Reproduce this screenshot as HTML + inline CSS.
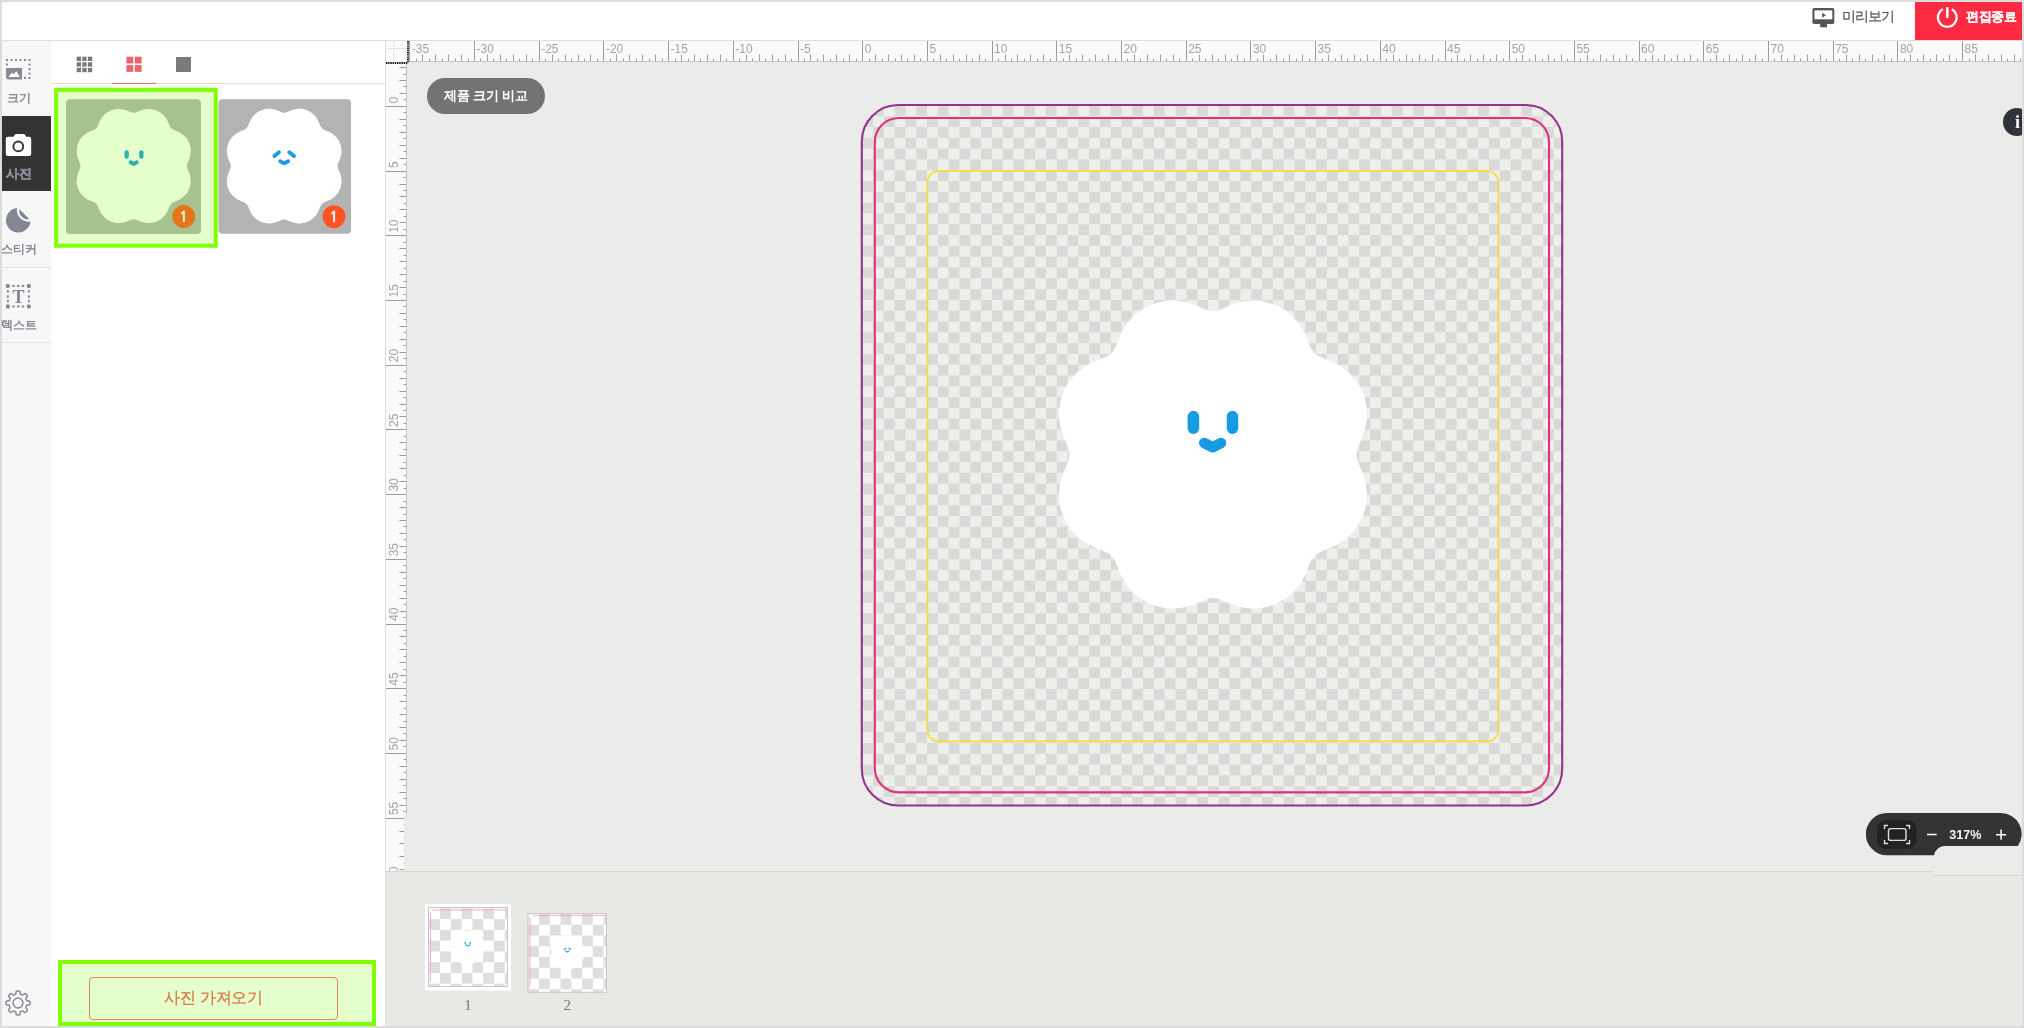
<!DOCTYPE html>
<html><head><meta charset="utf-8">
<style>
*{box-sizing:border-box;margin:0;padding:0}
html,body{width:2024px;height:1028px;overflow:hidden;background:#fff;font-family:"Liberation Sans",sans-serif}
.a{position:absolute;will-change:transform}
#frameT{left:0;top:0;width:2024px;height:2px;background:#dcdcdc}
#frameL{left:0;top:0;width:2px;height:1028px;background:#dcdcdc}
#frameR{left:2022px;top:0;width:2px;height:1028px;background:#dcdcdc}
#frameB{left:0;top:1026px;width:2024px;height:2px;background:#dcdcdc}
#hdrLine{left:2px;top:40px;width:2020px;height:1px;background:#dedede}
#endBtn{left:1915px;top:2px;width:107px;height:38px;background:#fd2b42;color:#fff}
#endBtn span{position:absolute;left:51px;top:6px;font-size:13px;font-weight:bold;letter-spacing:-0.3px;-webkit-text-stroke:0.15px #fff}
#prev span{position:absolute;left:1842px;top:8px;font-size:14px;color:#555;letter-spacing:-1px;will-change:transform;-webkit-text-stroke:0.2px #555}
#side{left:2px;top:41px;width:49px;height:985px;background:#f7f7f7}
.sideTxt{position:absolute;will-change:transform;font-size:12px;color:#7c808c;white-space:nowrap;-webkit-text-stroke:0.35px #7c808c}
#panel{left:51px;top:41px;width:334px;height:985px;background:#fff}
#panelBorder{left:385px;top:41px;width:1px;height:985px;background:#dedede}
#tabLine{left:51px;top:83px;width:334px;height:1px;background:#dedede}
#tabRed{left:112px;top:83px;width:44px;height:1px;background:#f0636b}
#cornerBox{left:386px;top:41px;width:21px;height:21px;background:#fafafa}
.hr{position:absolute;will-change:transform;left:407px;top:41px;background:#fafafa}
.vr{position:absolute;will-change:transform;left:386px;top:62px;background:#fafafa}
#canvas{left:407px;top:62px;width:1615px;height:809px;background:#ebebe9}
#film{left:386px;top:871px;width:1636px;height:155px;background:#e8e8e4;border-top:1px solid #d6d6d2}
#pill{left:427px;top:77.5px;width:118px;height:36.2px;border-radius:18.1px;background:#737373;color:#fff;font-size:13.3px;font-weight:bold;text-align:center;line-height:35px;letter-spacing:-0.2px}
</style></head><body>
<div class="a" id="frameT"></div><div class="a" id="frameL"></div><div class="a" id="frameR"></div><div class="a" id="frameB"></div>
<div class="a" id="hdrLine"></div>

<!-- header preview -->
<div id="prev">
<svg class="a" style="left:1812px;top:8px" width="23" height="20" viewBox="0 0 23 20">
<rect x="0.4" y="0" width="21.9" height="16" rx="1.8" fill="#555"/>
<rect x="2.5" y="2.4" width="17.8" height="8.9" fill="#fff"/>
<path d="M10.2 4.7L14 7.2L10.2 9.8Z" fill="#555"/>
<rect x="8.2" y="15.5" width="6.8" height="3.8" fill="#555"/>
</svg>
<span>미리보기</span>
</div>
<div class="a" id="endBtn">
<svg class="a" style="left:21px;top:3.2px" width="23" height="25" viewBox="0 0 23 25">
<path d="M6.9 4.1A9.4 9.4 0 1 0 15.7 4.1" fill="none" stroke="#fff" stroke-width="2.2"/>
<path d="M11.3 3.2V12.1" stroke="#fff" stroke-width="2.5" stroke-linecap="round"/>
</svg>
<span>편집종료</span>
</div>

<!-- sidebar -->
<div class="a" id="side"></div>
<svg class="a" style="left:5px;top:58px" width="27" height="23" viewBox="0 0 27 23">
<g fill="#868a96">
<rect x="1" y="1" width="2" height="2"/><rect x="5.5" y="1" width="2" height="2"/><rect x="10" y="1" width="2" height="2"/><rect x="14.5" y="1" width="2" height="2"/><rect x="19" y="1" width="2" height="2"/><rect x="23.5" y="1" width="2" height="2"/>
<rect x="1" y="5.5" width="2" height="2"/>
<rect x="23.5" y="5.5" width="2" height="2"/><rect x="23.5" y="10" width="2" height="2"/><rect x="23.5" y="14.5" width="2" height="2"/><rect x="23.5" y="19" width="2" height="2"/><rect x="19" y="19" width="2" height="2"/>
<path d="M1 10H17V21.5H4A3 3 0 0 1 1 18.5Z"/>
</g>
<path d="M3.5 19L7 14.5L8.6 16.5L11.2 13L14.8 19Z" fill="#fff"/>
</svg>
<div class="sideTxt" style="left:7px;top:90px">크기</div>

<div class="a" style="left:2px;top:116px;width:49px;height:75px;background:#333"></div>
<svg class="a" style="left:5px;top:133px" width="27" height="24" viewBox="0 0 27 24">
<path d="M8.5 3.8L10 1.6A1.5 1.5 0 0 1 11.3 1H18.5A1.5 1.5 0 0 1 19.8 1.6L21.3 3.8H24A2.2 2.2 0 0 1 26.2 6V20.7A2.2 2.2 0 0 1 24 22.9H3A2.2 2.2 0 0 1 0.8 20.7V6A2.2 2.2 0 0 1 3 3.8Z" fill="#fff"/>
<circle cx="13.3" cy="13.4" r="4.9" fill="none" stroke="#333" stroke-width="1.9"/>
</svg>
<div class="sideTxt" style="left:6px;top:165px;color:#fff;font-weight:bold;font-size:13px">사진</div>

<svg class="a" style="left:5px;top:207px" width="27" height="27" viewBox="0 0 27 27">
<path d="M12 1A11.73 11.73 0 0 0 25.5 14.5A12.3 12.3 0 1 1 12 1Z" fill="#838793"/>
<path d="M14.5 2.3A8.2 8.2 0 0 0 24.2 12.1Z" fill="#838793"/>
</svg>
<div class="sideTxt" style="left:1px;top:241px">스티커</div>
<div class="a" style="left:2px;top:267px;width:49px;height:1px;background:#e4e4e4"></div>

<svg class="a" style="left:5px;top:283px" width="27" height="26" viewBox="0 0 27 26">
<g fill="#838793">
<rect x="1" y="1.1" width="3.7" height="3.7"/><rect x="22" y="1.1" width="3.7" height="3.7"/><rect x="1" y="21.6" width="3.7" height="3.7"/><rect x="22" y="21.6" width="3.7" height="3.7"/>
<rect x="7.3" y="2" width="2.4" height="1.9"/><rect x="12.1" y="2" width="2.4" height="1.9"/><rect x="16.8" y="2" width="2.4" height="1.9"/>
<rect x="7.3" y="22.5" width="2.4" height="1.9"/><rect x="12.1" y="22.5" width="2.4" height="1.9"/><rect x="16.8" y="22.5" width="2.4" height="1.9"/>
<rect x="1.9" y="7.1" width="1.9" height="2.4"/><rect x="1.9" y="12.4" width="1.9" height="2.4"/><rect x="1.9" y="16.8" width="1.9" height="2.4"/>
<rect x="22.9" y="7.1" width="1.9" height="2.4"/><rect x="22.9" y="12.4" width="1.9" height="2.4"/><rect x="22.9" y="16.8" width="1.9" height="2.4"/>
</g>
<text x="13.4" y="19.8" text-anchor="middle" font-family="Liberation Serif" font-size="18" font-weight="bold" fill="#838793">T</text>
</svg>
<div class="sideTxt" style="left:1px;top:317px">텍스트</div>
<div class="a" style="left:2px;top:342px;width:49px;height:1px;background:#e4e4e4"></div>

<svg class="a" style="left:5.3px;top:990px" width="26" height="26" viewBox="0 0 26 26">
<path d="M13.00,1.00 13.31,1.01 13.63,1.03 13.94,1.05 14.25,1.11 14.55,1.22 14.82,1.51 15.00,2.20 15.08,3.20 15.19,3.89 15.36,4.19 15.57,4.33 15.79,4.42 16.01,4.51 16.23,4.59 16.45,4.68 16.66,4.77 16.88,4.87 17.09,4.97 17.31,5.05 17.56,5.10 17.89,5.02 18.46,4.60 19.22,3.95 19.84,3.59 20.23,3.57 20.53,3.71 20.78,3.89 21.02,4.09 21.26,4.30 21.48,4.52 21.70,4.74 21.91,4.98 22.11,5.22 22.29,5.47 22.43,5.77 22.41,6.16 22.05,6.78 21.40,7.54 20.98,8.11 20.90,8.44 20.95,8.69 21.03,8.91 21.13,9.12 21.23,9.34 21.32,9.55 21.41,9.77 21.49,9.99 21.58,10.21 21.67,10.43 21.81,10.64 22.11,10.81 22.80,10.92 23.80,11.00 24.49,11.18 24.78,11.45 24.89,11.75 24.95,12.06 24.97,12.37 24.99,12.69 25.00,13.00 24.99,13.31 24.97,13.63 24.95,13.94 24.89,14.25 24.78,14.55 24.49,14.82 23.80,15.00 22.80,15.08 22.11,15.19 21.81,15.36 21.67,15.57 21.58,15.79 21.49,16.01 21.41,16.23 21.32,16.45 21.23,16.66 21.13,16.88 21.03,17.09 20.95,17.31 20.90,17.56 20.98,17.89 21.40,18.46 22.05,19.22 22.41,19.84 22.43,20.23 22.29,20.53 22.11,20.78 21.91,21.02 21.70,21.26 21.48,21.48 21.26,21.70 21.02,21.91 20.78,22.11 20.53,22.29 20.23,22.43 19.84,22.41 19.22,22.05 18.46,21.40 17.89,20.98 17.56,20.90 17.31,20.95 17.09,21.03 16.88,21.13 16.66,21.23 16.45,21.32 16.23,21.41 16.01,21.49 15.79,21.58 15.57,21.67 15.36,21.81 15.19,22.11 15.08,22.80 15.00,23.80 14.82,24.49 14.55,24.78 14.25,24.89 13.94,24.95 13.63,24.97 13.31,24.99 13.00,25.00 12.69,24.99 12.37,24.97 12.06,24.95 11.75,24.89 11.45,24.78 11.18,24.49 11.00,23.80 10.92,22.80 10.81,22.11 10.64,21.81 10.43,21.67 10.21,21.58 9.99,21.49 9.77,21.41 9.55,21.32 9.34,21.23 9.12,21.13 8.91,21.03 8.69,20.95 8.44,20.90 8.11,20.98 7.54,21.40 6.78,22.05 6.16,22.41 5.77,22.43 5.47,22.29 5.22,22.11 4.98,21.91 4.74,21.70 4.52,21.48 4.30,21.26 4.09,21.02 3.89,20.78 3.71,20.53 3.57,20.23 3.59,19.84 3.95,19.22 4.60,18.46 5.02,17.89 5.10,17.56 5.05,17.31 4.97,17.09 4.87,16.88 4.77,16.66 4.68,16.45 4.59,16.23 4.51,16.01 4.42,15.79 4.33,15.57 4.19,15.36 3.89,15.19 3.20,15.08 2.20,15.00 1.51,14.82 1.22,14.55 1.11,14.25 1.05,13.94 1.03,13.63 1.01,13.31 1.00,13.00 1.01,12.69 1.03,12.37 1.05,12.06 1.11,11.75 1.22,11.45 1.51,11.18 2.20,11.00 3.20,10.92 3.89,10.81 4.19,10.64 4.33,10.43 4.42,10.21 4.51,9.99 4.59,9.77 4.68,9.55 4.77,9.34 4.87,9.12 4.97,8.91 5.05,8.69 5.10,8.44 5.02,8.11 4.60,7.54 3.95,6.78 3.59,6.16 3.57,5.77 3.71,5.47 3.89,5.22 4.09,4.98 4.30,4.74 4.52,4.52 4.74,4.30 4.98,4.09 5.22,3.89 5.47,3.71 5.77,3.57 6.16,3.59 6.78,3.95 7.54,4.60 8.11,5.02 8.44,5.10 8.69,5.05 8.91,4.97 9.12,4.87 9.34,4.77 9.55,4.68 9.77,4.59 9.99,4.51 10.21,4.42 10.43,4.33 10.64,4.19 10.81,3.89 10.92,3.20 11.00,2.20 11.18,1.51 11.45,1.22 11.75,1.11 12.06,1.05 12.37,1.03 12.69,1.01Z" fill="none" stroke="#868a96" stroke-width="1.5" stroke-linejoin="round"/>
<circle cx="13" cy="13" r="4.9" fill="none" stroke="#868a96" stroke-width="1.5"/>
</svg>

<!-- panel -->
<div class="a" id="panel"></div>
<div class="a" id="panelBorder"></div>
<div class="a" id="tabLine"></div>
<div class="a" id="tabRed"></div>
<svg class="a" style="left:76px;top:56px" width="17" height="17" viewBox="0 0 17 17">
<g fill="#777"><rect x="0.7" y="0.7" width="4.3" height="4.3"/><rect x="6.3" y="0.7" width="4.3" height="4.3"/><rect x="11.9" y="0.7" width="4.3" height="4.3"/>
<rect x="0.7" y="6.3" width="4.3" height="4.3"/><rect x="6.3" y="6.3" width="4.3" height="4.3"/><rect x="11.9" y="6.3" width="4.3" height="4.3"/>
<rect x="0.7" y="11.9" width="4.3" height="4.3"/><rect x="6.3" y="11.9" width="4.3" height="4.3"/><rect x="11.9" y="11.9" width="4.3" height="4.3"/></g>
</svg>
<svg class="a" style="left:126px;top:56px" width="17" height="17" viewBox="0 0 17 17">
<g fill="#f0636b"><rect x="0.4" y="0.7" width="6.8" height="6.8"/><rect x="8.8" y="0.7" width="6.8" height="6.8"/><rect x="0.4" y="9.1" width="6.8" height="6.8"/><rect x="8.8" y="9.1" width="6.8" height="6.8"/></g>
</svg>
<div class="a" style="left:176px;top:57px;width:15px;height:15px;background:#7a7a7a"></div>

<!-- thumbnails -->
<svg class="a" style="left:0;top:0" width="390" height="260" viewBox="0 0 390 260">
<defs><filter id="tb" x="-10%" y="-10%" width="120%" height="120%"><feGaussianBlur stdDeviation="0.6"/></filter></defs>
<rect x="218.4" y="99.3" width="132.6" height="134.5" rx="4" fill="#b3b3b3"/>
<path d="M337.6,166.1 337.9,164.2 338.6,162.3 339.5,160.3 340.2,158.2 340.9,156.1 341.3,154.0 341.5,151.8 341.5,149.7 341.2,147.6 340.8,145.5 340.1,143.5 339.3,141.6 338.2,139.8 337.0,138.0 335.6,136.4 334.0,135.0 332.3,133.7 330.4,132.5 328.4,131.6 326.4,130.7 324.4,129.9 322.7,128.9 321.4,127.6 320.4,125.9 319.6,123.9 318.7,121.9 317.8,119.9 316.6,118.0 315.3,116.3 313.9,114.7 312.3,113.3 310.5,112.1 308.7,111.0 306.8,110.2 304.8,109.5 302.7,109.1 300.6,108.8 298.5,108.8 296.3,109.0 294.2,109.4 292.1,110.1 290.0,110.8 288.0,111.7 286.1,112.4 284.2,112.7 282.3,112.4 280.4,111.7 278.4,110.8 276.3,110.1 274.2,109.4 272.1,109.0 269.9,108.8 267.8,108.8 265.7,109.1 263.6,109.5 261.6,110.2 259.7,111.0 257.9,112.1 256.1,113.3 254.5,114.7 253.1,116.3 251.8,118.0 250.6,119.9 249.7,121.9 248.8,123.9 248.0,125.9 247.0,127.6 245.7,128.9 244.0,129.9 242.0,130.7 240.0,131.6 238.0,132.5 236.1,133.7 234.4,135.0 232.8,136.4 231.4,138.0 230.2,139.8 229.1,141.6 228.3,143.5 227.6,145.5 227.2,147.6 226.9,149.7 226.9,151.8 227.1,154.0 227.5,156.1 228.2,158.2 228.9,160.3 229.8,162.3 230.5,164.2 230.8,166.1 230.5,168.0 229.8,169.9 228.9,171.9 228.2,174.0 227.5,176.1 227.1,178.2 226.9,180.4 226.9,182.5 227.2,184.6 227.6,186.7 228.3,188.7 229.1,190.6 230.2,192.4 231.4,194.2 232.8,195.8 234.4,197.2 236.1,198.5 238.0,199.7 240.0,200.6 242.0,201.5 244.0,202.3 245.7,203.3 247.0,204.6 248.0,206.3 248.8,208.3 249.7,210.3 250.6,212.3 251.8,214.2 253.1,215.9 254.5,217.5 256.1,218.9 257.9,220.1 259.7,221.2 261.6,222.0 263.6,222.7 265.7,223.1 267.8,223.4 269.9,223.4 272.1,223.2 274.2,222.8 276.3,222.1 278.4,221.4 280.4,220.5 282.3,219.8 284.2,219.5 286.1,219.8 288.0,220.5 290.0,221.4 292.1,222.1 294.2,222.8 296.3,223.2 298.5,223.4 300.6,223.4 302.7,223.1 304.8,222.7 306.8,222.0 308.7,221.2 310.5,220.1 312.3,218.9 313.9,217.5 315.3,215.9 316.6,214.2 317.8,212.3 318.7,210.3 319.6,208.3 320.4,206.3 321.4,204.6 322.7,203.3 324.4,202.3 326.4,201.5 328.4,200.6 330.4,199.7 332.3,198.5 334.0,197.2 335.6,195.8 337.0,194.2 338.2,192.4 339.3,190.6 340.1,188.7 340.8,186.7 341.2,184.6 341.5,182.5 341.5,180.4 341.3,178.2 340.9,176.1 340.2,174.0 339.5,171.9 338.6,169.9 337.9,168.0Z" fill="#fff" filter="url(#tb)"/>
<g stroke="#1a9be3" stroke-width="3.8" stroke-linecap="round" fill="none">
<path d="M274.3 156L279 152.3"/><path d="M289.3 152.3L294 156"/>
<path d="M280.2 161.3L284.2 163.4L288.2 161.3" stroke-linejoin="round"/>
</g>
<circle cx="334" cy="216.6" r="11.4" fill="#ff5322"/>
<path d="M331.1 213.3L333.4 210.8H335.1V222.2H333.2V213.3L331.8 214.6Z" fill="#fff"/>

<rect x="66" y="99.3" width="135" height="134.7" rx="4" fill="#b3b3b3"/>
<path d="M186.9,166.0 187.2,164.1 187.9,162.2 188.7,160.2 189.5,158.2 190.1,156.1 190.5,153.9 190.7,151.8 190.7,149.7 190.5,147.6 190.0,145.5 189.4,143.5 188.5,141.6 187.5,139.8 186.2,138.1 184.8,136.5 183.3,135.0 181.5,133.7 179.7,132.6 177.7,131.6 175.7,130.8 173.7,130.0 172.0,129.0 170.7,127.7 169.7,126.0 168.9,124.0 168.1,122.0 167.1,120.0 166.0,118.2 164.7,116.4 163.2,114.9 161.6,113.5 159.9,112.2 158.1,111.2 156.2,110.3 154.2,109.7 152.1,109.2 150.0,109.0 147.9,109.0 145.8,109.2 143.6,109.6 141.5,110.2 139.5,111.0 137.5,111.8 135.6,112.5 133.7,112.8 131.8,112.5 129.9,111.8 127.9,111.0 125.9,110.2 123.8,109.6 121.6,109.2 119.5,109.0 117.4,109.0 115.3,109.2 113.2,109.7 111.2,110.3 109.3,111.2 107.5,112.2 105.8,113.5 104.2,114.9 102.7,116.4 101.4,118.2 100.3,120.0 99.3,122.0 98.5,124.0 97.7,126.0 96.7,127.7 95.4,129.0 93.7,130.0 91.7,130.8 89.7,131.6 87.7,132.6 85.9,133.7 84.1,135.0 82.6,136.5 81.2,138.1 79.9,139.8 78.9,141.6 78.0,143.5 77.4,145.5 76.9,147.6 76.7,149.7 76.7,151.8 76.9,153.9 77.3,156.1 77.9,158.2 78.7,160.2 79.5,162.2 80.2,164.1 80.5,166.0 80.2,167.9 79.5,169.8 78.7,171.8 77.9,173.8 77.3,175.9 76.9,178.1 76.7,180.2 76.7,182.3 76.9,184.4 77.4,186.5 78.0,188.5 78.9,190.4 79.9,192.2 81.2,193.9 82.6,195.5 84.1,197.0 85.9,198.3 87.7,199.4 89.7,200.4 91.7,201.2 93.7,202.0 95.4,203.0 96.7,204.3 97.7,206.0 98.5,208.0 99.3,210.0 100.3,212.0 101.4,213.8 102.7,215.6 104.2,217.1 105.8,218.5 107.5,219.8 109.3,220.8 111.2,221.7 113.2,222.3 115.3,222.8 117.4,223.0 119.5,223.0 121.6,222.8 123.8,222.4 125.9,221.8 127.9,221.0 129.9,220.2 131.8,219.5 133.7,219.2 135.6,219.5 137.5,220.2 139.5,221.0 141.5,221.8 143.6,222.4 145.8,222.8 147.9,223.0 150.0,223.0 152.1,222.8 154.2,222.3 156.2,221.7 158.1,220.8 159.9,219.8 161.6,218.5 163.2,217.1 164.7,215.6 166.0,213.8 167.1,212.0 168.1,210.0 168.9,208.0 169.7,206.0 170.7,204.3 172.0,203.0 173.7,202.0 175.7,201.2 177.7,200.4 179.7,199.4 181.5,198.3 183.3,197.0 184.8,195.5 186.2,193.9 187.5,192.2 188.5,190.4 189.4,188.5 190.0,186.5 190.5,184.4 190.7,182.3 190.7,180.2 190.5,178.1 190.1,175.9 189.5,173.8 188.7,171.8 187.9,169.8 187.2,167.9Z" fill="#fff" filter="url(#tb)"/>
<g fill="#1a9be3"><rect x="124.5" y="150.2" width="4.3" height="8.6" rx="2.15"/><rect x="139.2" y="150.2" width="4.3" height="8.6" rx="2.15"/></g>
<path d="M130.6 162.3L133.7 163.9L136.8 162.3" stroke="#1a9be3" stroke-width="3.9" stroke-linecap="round" stroke-linejoin="round" fill="none"/>
<circle cx="183.7" cy="216.5" r="11.4" fill="#ff5322"/>
<path d="M180.8 213.2L183.1 210.7H184.8V222.1H182.9V213.2L181.5 214.5Z" fill="#fff"/>
<rect x="56.2" y="89.8" width="159.5" height="155.9" fill="rgba(127,255,0,0.2)" stroke="#7fff00" stroke-width="4"/>
</svg>

<!-- bottom import button -->
<div class="a" style="left:58px;top:960px;width:318px;height:66px;border:4px solid #7fff00;background:rgba(127,255,0,0.2)"></div>
<div class="a" style="left:88.5px;top:976.5px;width:249px;height:43px;border:1.5px solid #e0875c;border-radius:4px;color:#dc7a4e;font-size:16px;text-align:center;line-height:39px;letter-spacing:-0.3px;-webkit-text-stroke:0.3px #dc7a4e">사진 가져오기</div>

<!-- rulers -->
<div class="a" id="cornerBox"></div>
<svg class="hr" width="1615" height="21" viewBox="0 0 1615 21"><path d="M-10.5 13.5V20.5M-3.5 17.5V20.5M2.5 0V20.5M9.5 17.5V20.5M15.5 13.5V20.5M22.5 17.5V20.5M28.5 13.5V20.5M35.5 17.5V20.5M41.5 13.5V20.5M48.5 17.5V20.5M54.5 13.5V20.5M61.5 17.5V20.5M67.5 0V20.5M73.5 17.5V20.5M80.5 13.5V20.5M86.5 17.5V20.5M93.5 13.5V20.5M99.5 17.5V20.5M106.5 13.5V20.5M112.5 17.5V20.5M119.5 13.5V20.5M125.5 17.5V20.5M132.5 0V20.5M138.5 17.5V20.5M145.5 13.5V20.5M151.5 17.5V20.5M158.5 13.5V20.5M164.5 17.5V20.5M171.5 13.5V20.5M177.5 17.5V20.5M183.5 13.5V20.5M190.5 17.5V20.5M196.5 0V20.5M203.5 17.5V20.5M209.5 13.5V20.5M216.5 17.5V20.5M222.5 13.5V20.5M229.5 17.5V20.5M235.5 13.5V20.5M242.5 17.5V20.5M248.5 13.5V20.5M255.5 17.5V20.5M261.5 0V20.5M268.5 17.5V20.5M274.5 13.5V20.5M281.5 17.5V20.5M287.5 13.5V20.5M293.5 17.5V20.5M300.5 13.5V20.5M306.5 17.5V20.5M313.5 13.5V20.5M319.5 17.5V20.5M326.5 0V20.5M332.5 17.5V20.5M339.5 13.5V20.5M345.5 17.5V20.5M352.5 13.5V20.5M358.5 17.5V20.5M365.5 13.5V20.5M371.5 17.5V20.5M378.5 13.5V20.5M384.5 17.5V20.5M391.5 0V20.5M397.5 17.5V20.5M403.5 13.5V20.5M410.5 17.5V20.5M416.5 13.5V20.5M423.5 17.5V20.5M429.5 13.5V20.5M436.5 17.5V20.5M442.5 13.5V20.5M449.5 17.5V20.5M455.5 0V20.5M462.5 17.5V20.5M468.5 13.5V20.5M475.5 17.5V20.5M481.5 13.5V20.5M488.5 17.5V20.5M494.5 13.5V20.5M500.5 17.5V20.5M507.5 13.5V20.5M513.5 17.5V20.5M520.5 0V20.5M526.5 17.5V20.5M533.5 13.5V20.5M539.5 17.5V20.5M546.5 13.5V20.5M552.5 17.5V20.5M559.5 13.5V20.5M565.5 17.5V20.5M572.5 13.5V20.5M578.5 17.5V20.5M585.5 0V20.5M591.5 17.5V20.5M598.5 13.5V20.5M604.5 17.5V20.5M610.5 13.5V20.5M617.5 17.5V20.5M623.5 13.5V20.5M630.5 17.5V20.5M636.5 13.5V20.5M643.5 17.5V20.5M649.5 0V20.5M656.5 17.5V20.5M662.5 13.5V20.5M669.5 17.5V20.5M675.5 13.5V20.5M682.5 17.5V20.5M688.5 13.5V20.5M695.5 17.5V20.5M701.5 13.5V20.5M708.5 17.5V20.5M714.5 0V20.5M720.5 17.5V20.5M727.5 13.5V20.5M733.5 17.5V20.5M740.5 13.5V20.5M746.5 17.5V20.5M753.5 13.5V20.5M759.5 17.5V20.5M766.5 13.5V20.5M772.5 17.5V20.5M779.5 0V20.5M785.5 17.5V20.5M792.5 13.5V20.5M798.5 17.5V20.5M805.5 13.5V20.5M811.5 17.5V20.5M818.5 13.5V20.5M824.5 17.5V20.5M830.5 13.5V20.5M837.5 17.5V20.5M843.5 0V20.5M850.5 17.5V20.5M856.5 13.5V20.5M863.5 17.5V20.5M869.5 13.5V20.5M876.5 17.5V20.5M882.5 13.5V20.5M889.5 17.5V20.5M895.5 13.5V20.5M902.5 17.5V20.5M908.5 0V20.5M915.5 17.5V20.5M921.5 13.5V20.5M928.5 17.5V20.5M934.5 13.5V20.5M940.5 17.5V20.5M947.5 13.5V20.5M953.5 17.5V20.5M960.5 13.5V20.5M966.5 17.5V20.5M973.5 0V20.5M979.5 17.5V20.5M986.5 13.5V20.5M992.5 17.5V20.5M999.5 13.5V20.5M1005.5 17.5V20.5M1012.5 13.5V20.5M1018.5 17.5V20.5M1025.5 13.5V20.5M1031.5 17.5V20.5M1038.5 0V20.5M1044.5 17.5V20.5M1050.5 13.5V20.5M1057.5 17.5V20.5M1063.5 13.5V20.5M1070.5 17.5V20.5M1076.5 13.5V20.5M1083.5 17.5V20.5M1089.5 13.5V20.5M1096.5 17.5V20.5M1102.5 0V20.5M1109.5 17.5V20.5M1115.5 13.5V20.5M1122.5 17.5V20.5M1128.5 13.5V20.5M1135.5 17.5V20.5M1141.5 13.5V20.5M1147.5 17.5V20.5M1154.5 13.5V20.5M1160.5 17.5V20.5M1167.5 0V20.5M1173.5 17.5V20.5M1180.5 13.5V20.5M1186.5 17.5V20.5M1193.5 13.5V20.5M1199.5 17.5V20.5M1206.5 13.5V20.5M1212.5 17.5V20.5M1219.5 13.5V20.5M1225.5 17.5V20.5M1232.5 0V20.5M1238.5 17.5V20.5M1245.5 13.5V20.5M1251.5 17.5V20.5M1257.5 13.5V20.5M1264.5 17.5V20.5M1270.5 13.5V20.5M1277.5 17.5V20.5M1283.5 13.5V20.5M1290.5 17.5V20.5M1296.5 0V20.5M1303.5 17.5V20.5M1309.5 13.5V20.5M1316.5 17.5V20.5M1322.5 13.5V20.5M1329.5 17.5V20.5M1335.5 13.5V20.5M1342.5 17.5V20.5M1348.5 13.5V20.5M1355.5 17.5V20.5M1361.5 0V20.5M1367.5 17.5V20.5M1374.5 13.5V20.5M1380.5 17.5V20.5M1387.5 13.5V20.5M1393.5 17.5V20.5M1400.5 13.5V20.5M1406.5 17.5V20.5M1413.5 13.5V20.5M1419.5 17.5V20.5M1426.5 0V20.5M1432.5 17.5V20.5M1439.5 13.5V20.5M1445.5 17.5V20.5M1452.5 13.5V20.5M1458.5 17.5V20.5M1465.5 13.5V20.5M1471.5 17.5V20.5M1477.5 13.5V20.5M1484.5 17.5V20.5M1490.5 0V20.5M1497.5 17.5V20.5M1503.5 13.5V20.5M1510.5 17.5V20.5M1516.5 13.5V20.5M1523.5 17.5V20.5M1529.5 13.5V20.5M1536.5 17.5V20.5M1542.5 13.5V20.5M1549.5 17.5V20.5M1555.5 0V20.5M1562.5 17.5V20.5M1568.5 13.5V20.5M1575.5 17.5V20.5M1581.5 13.5V20.5M1587.5 17.5V20.5M1594.5 13.5V20.5M1600.5 17.5V20.5M1607.5 13.5V20.5M1613.5 17.5V20.5M1620.5 0V20.5M1626.5 17.5V20.5M1633.5 13.5V20.5M1639.5 17.5V20.5" stroke="#9c9c9c" stroke-width="1" fill="none"/><g fill="#a4a4a4" font-size="12" font-family="Liberation Sans"><text x="4.8" y="11.8">-35</text><text x="69.5" y="11.8">-30</text><text x="134.2" y="11.8">-25</text><text x="198.9" y="11.8">-20</text><text x="263.6" y="11.8">-15</text><text x="328.3" y="11.8">-10</text><text x="393.0" y="11.8">-5</text><text x="457.7" y="11.8">0</text><text x="522.4" y="11.8">5</text><text x="587.1" y="11.8">10</text><text x="651.8" y="11.8">15</text><text x="716.5" y="11.8">20</text><text x="781.2" y="11.8">25</text><text x="845.9" y="11.8">30</text><text x="910.6" y="11.8">35</text><text x="975.3" y="11.8">40</text><text x="1040.0" y="11.8">45</text><text x="1104.7" y="11.8">50</text><text x="1169.4" y="11.8">55</text><text x="1234.1" y="11.8">60</text><text x="1298.8" y="11.8">65</text><text x="1363.5" y="11.8">70</text><text x="1428.2" y="11.8">75</text><text x="1492.9" y="11.8">80</text><text x="1557.6" y="11.8">85</text><text x="1622.3" y="11.8">90</text></g><path d="M0 20.5H1615" stroke="#c4c4c4" stroke-width="1"/></svg>
<svg class="vr" width="21" height="809" viewBox="0 0 21 809"><path d="M13.5 -7.5H20.5M17.5 -0.5H20.5M13.5 5.5H20.5M17.5 12.5H20.5M13.5 18.5H20.5M17.5 24.5H20.5M13.5 31.5H20.5M17.5 37.5H20.5M0 44.5H20.5M17.5 50.5H20.5M13.5 57.5H20.5M17.5 63.5H20.5M13.5 70.5H20.5M17.5 76.5H20.5M13.5 83.5H20.5M17.5 89.5H20.5M13.5 96.5H20.5M17.5 102.5H20.5M0 109.5H20.5M17.5 115.5H20.5M13.5 122.5H20.5M17.5 128.5H20.5M13.5 134.5H20.5M17.5 141.5H20.5M13.5 147.5H20.5M17.5 154.5H20.5M13.5 160.5H20.5M17.5 167.5H20.5M0 173.5H20.5M17.5 180.5H20.5M13.5 186.5H20.5M17.5 193.5H20.5M13.5 199.5H20.5M17.5 206.5H20.5M13.5 212.5H20.5M17.5 219.5H20.5M13.5 225.5H20.5M17.5 232.5H20.5M0 238.5H20.5M17.5 244.5H20.5M13.5 251.5H20.5M17.5 257.5H20.5M13.5 264.5H20.5M17.5 270.5H20.5M13.5 277.5H20.5M17.5 283.5H20.5M13.5 290.5H20.5M17.5 296.5H20.5M0 303.5H20.5M17.5 309.5H20.5M13.5 316.5H20.5M17.5 322.5H20.5M13.5 329.5H20.5M17.5 335.5H20.5M13.5 342.5H20.5M17.5 348.5H20.5M13.5 354.5H20.5M17.5 361.5H20.5M0 367.5H20.5M17.5 374.5H20.5M13.5 380.5H20.5M17.5 387.5H20.5M13.5 393.5H20.5M17.5 400.5H20.5M13.5 406.5H20.5M17.5 413.5H20.5M13.5 419.5H20.5M17.5 426.5H20.5M0 432.5H20.5M17.5 439.5H20.5M13.5 445.5H20.5M17.5 452.5H20.5M13.5 458.5H20.5M17.5 464.5H20.5M13.5 471.5H20.5M17.5 477.5H20.5M13.5 484.5H20.5M17.5 490.5H20.5M0 497.5H20.5M17.5 503.5H20.5M13.5 510.5H20.5M17.5 516.5H20.5M13.5 523.5H20.5M17.5 529.5H20.5M13.5 536.5H20.5M17.5 542.5H20.5M13.5 549.5H20.5M17.5 555.5H20.5M0 562.5H20.5M17.5 568.5H20.5M13.5 574.5H20.5M17.5 581.5H20.5M13.5 587.5H20.5M17.5 594.5H20.5M13.5 600.5H20.5M17.5 607.5H20.5M13.5 613.5H20.5M17.5 620.5H20.5M0 626.5H20.5M17.5 633.5H20.5M13.5 639.5H20.5M17.5 646.5H20.5M13.5 652.5H20.5M17.5 659.5H20.5M13.5 665.5H20.5M17.5 671.5H20.5M13.5 678.5H20.5M17.5 684.5H20.5M0 691.5H20.5M17.5 697.5H20.5M13.5 704.5H20.5M17.5 710.5H20.5M13.5 717.5H20.5M17.5 723.5H20.5M13.5 730.5H20.5M17.5 736.5H20.5M13.5 743.5H20.5M17.5 749.5H20.5M0 756.5H20.5M17.5 762.5H20.5M13.5 769.5H20.5M17.5 775.5H20.5M13.5 781.5H20.5M17.5 788.5H20.5M13.5 794.5H20.5M17.5 801.5H20.5M13.5 807.5H20.5M17.5 814.5H20.5M0 820.5H20.5M17.5 827.5H20.5M13.5 833.5H20.5" stroke="#9c9c9c" stroke-width="1" fill="none"/><g fill="#a4a4a4" font-size="12" font-family="Liberation Sans"><text transform="translate(12.2 41.4) rotate(-90)">0</text><text transform="translate(12.2 106.1) rotate(-90)">5</text><text transform="translate(12.2 170.8) rotate(-90)">10</text><text transform="translate(12.2 235.5) rotate(-90)">15</text><text transform="translate(12.2 300.2) rotate(-90)">20</text><text transform="translate(12.2 364.9) rotate(-90)">25</text><text transform="translate(12.2 429.6) rotate(-90)">30</text><text transform="translate(12.2 494.3) rotate(-90)">35</text><text transform="translate(12.2 559.0) rotate(-90)">40</text><text transform="translate(12.2 623.7) rotate(-90)">45</text><text transform="translate(12.2 688.4) rotate(-90)">50</text><text transform="translate(12.2 753.1) rotate(-90)">55</text><text transform="translate(12.2 817.8) rotate(-90)">60</text></g><path d="M20.5 0V809" stroke="#c4c4c4" stroke-width="1"/></svg>

<div class="a" style="left:404px;top:814px;width:3px;height:57px;background:#ebebe9"></div>
<!-- canvas -->
<div class="a" id="canvas"></div>
<svg class="a" style="left:407px;top:63px" width="1615" height="808" viewBox="407 63 1615 808">
<defs>
<pattern id="chk" x="862.2" y="105.4" width="21.612" height="21.612" patternUnits="userSpaceOnUse">
<rect width="21.612" height="21.612" fill="#eeeeeb"/>
<rect x="10.806" y="0" width="10.806" height="10.806" fill="#d9d9d7"/>
<rect x="0" y="10.806" width="10.806" height="10.806" fill="#d9d9d7"/>
</pattern>
</defs>
<rect x="862.2" y="105.4" width="700.6" height="700.6" rx="36" fill="url(#chk)"/>
<rect x="861.8" y="104.95" width="700.4" height="700.5" rx="36.5" fill="none" stroke="#923390" stroke-width="2.1"/>
<rect x="874.8" y="118.03" width="674.25" height="674.33" rx="24" fill="none" stroke="#e0307f" stroke-width="2.1"/>
<rect x="927.4" y="170.85" width="570.87" height="570.6" rx="11.5" fill="none" stroke="#f9dc3c" stroke-width="1.7"/>
<path d="M1356.5,454.5 1356.7,452.0 1357.2,449.5 1358.1,446.9 1359.2,444.3 1360.3,441.6 1361.4,438.9 1362.6,436.1 1363.6,433.3 1364.5,430.5 1365.2,427.7 1365.9,424.8 1366.4,421.9 1366.7,419.0 1366.9,416.1 1366.9,413.3 1366.8,410.4 1366.6,407.6 1366.2,404.7 1365.6,401.9 1365.0,399.2 1364.1,396.5 1363.2,393.8 1362.1,391.2 1360.9,388.7 1359.6,386.2 1358.1,383.7 1356.5,381.4 1354.8,379.1 1353.0,376.9 1351.0,374.8 1348.9,372.8 1346.8,370.9 1344.5,369.1 1342.1,367.4 1339.6,365.8 1337.1,364.4 1334.4,363.0 1331.7,361.7 1329.0,360.6 1326.3,359.5 1323.6,358.4 1321.0,357.3 1318.6,356.1 1316.4,354.7 1314.4,353.1 1312.8,351.1 1311.4,348.9 1310.2,346.5 1309.1,343.9 1308.0,341.2 1306.9,338.5 1305.8,335.8 1304.5,333.1 1303.1,330.4 1301.7,327.9 1300.1,325.4 1298.4,323.0 1296.6,320.7 1294.7,318.6 1292.7,316.5 1290.6,314.5 1288.4,312.7 1286.1,311.0 1283.8,309.4 1281.3,307.9 1278.8,306.6 1276.3,305.4 1273.7,304.3 1271.0,303.4 1268.3,302.5 1265.6,301.9 1262.8,301.3 1259.9,300.9 1257.1,300.7 1254.2,300.6 1251.4,300.6 1248.5,300.8 1245.6,301.1 1242.7,301.6 1239.8,302.3 1237.0,303.0 1234.2,303.9 1231.4,304.9 1228.6,306.1 1225.9,307.2 1223.2,308.3 1220.6,309.4 1218.0,310.3 1215.5,310.8 1213.0,311.0 1210.5,310.8 1208.0,310.3 1205.4,309.4 1202.8,308.3 1200.1,307.2 1197.4,306.1 1194.6,304.9 1191.8,303.9 1189.0,303.0 1186.2,302.3 1183.3,301.6 1180.4,301.1 1177.5,300.8 1174.6,300.6 1171.8,300.6 1168.9,300.7 1166.1,300.9 1163.2,301.3 1160.4,301.9 1157.7,302.5 1155.0,303.4 1152.3,304.3 1149.7,305.4 1147.2,306.6 1144.7,307.9 1142.2,309.4 1139.9,311.0 1137.6,312.7 1135.4,314.5 1133.3,316.5 1131.3,318.6 1129.4,320.7 1127.6,323.0 1125.9,325.4 1124.3,327.9 1122.9,330.4 1121.5,333.1 1120.2,335.8 1119.1,338.5 1118.0,341.2 1116.9,343.9 1115.8,346.5 1114.6,348.9 1113.2,351.1 1111.6,353.1 1109.6,354.7 1107.4,356.1 1105.0,357.3 1102.4,358.4 1099.7,359.5 1097.0,360.6 1094.3,361.7 1091.6,363.0 1088.9,364.4 1086.4,365.8 1083.9,367.4 1081.5,369.1 1079.2,370.9 1077.1,372.8 1075.0,374.8 1073.0,376.9 1071.2,379.1 1069.5,381.4 1067.9,383.7 1066.4,386.2 1065.1,388.7 1063.9,391.2 1062.8,393.8 1061.9,396.5 1061.0,399.2 1060.4,401.9 1059.8,404.7 1059.4,407.6 1059.2,410.4 1059.1,413.3 1059.1,416.1 1059.3,419.0 1059.6,421.9 1060.1,424.8 1060.8,427.7 1061.5,430.5 1062.4,433.3 1063.4,436.1 1064.6,438.9 1065.7,441.6 1066.8,444.3 1067.9,446.9 1068.8,449.5 1069.3,452.0 1069.5,454.5 1069.3,457.0 1068.8,459.5 1067.9,462.1 1066.8,464.7 1065.7,467.4 1064.6,470.1 1063.4,472.9 1062.4,475.7 1061.5,478.5 1060.8,481.3 1060.1,484.2 1059.6,487.1 1059.3,490.0 1059.1,492.9 1059.1,495.7 1059.2,498.6 1059.4,501.4 1059.8,504.3 1060.4,507.1 1061.0,509.8 1061.9,512.5 1062.8,515.2 1063.9,517.8 1065.1,520.3 1066.4,522.8 1067.9,525.3 1069.5,527.6 1071.2,529.9 1073.0,532.1 1075.0,534.2 1077.1,536.2 1079.2,538.1 1081.5,539.9 1083.9,541.6 1086.4,543.2 1088.9,544.6 1091.6,546.0 1094.3,547.3 1097.0,548.4 1099.7,549.5 1102.4,550.6 1105.0,551.7 1107.4,552.9 1109.6,554.3 1111.6,555.9 1113.2,557.9 1114.6,560.1 1115.8,562.5 1116.9,565.1 1118.0,567.8 1119.1,570.5 1120.2,573.2 1121.5,575.9 1122.9,578.6 1124.3,581.1 1125.9,583.6 1127.6,586.0 1129.4,588.3 1131.3,590.4 1133.3,592.5 1135.4,594.5 1137.6,596.3 1139.9,598.0 1142.2,599.6 1144.7,601.1 1147.2,602.4 1149.7,603.6 1152.3,604.7 1155.0,605.6 1157.7,606.5 1160.4,607.1 1163.2,607.7 1166.1,608.1 1168.9,608.3 1171.8,608.4 1174.6,608.4 1177.5,608.2 1180.4,607.9 1183.3,607.4 1186.2,606.7 1189.0,606.0 1191.8,605.1 1194.6,604.1 1197.4,602.9 1200.1,601.8 1202.8,600.7 1205.4,599.6 1208.0,598.7 1210.5,598.2 1213.0,598.0 1215.5,598.2 1218.0,598.7 1220.6,599.6 1223.2,600.7 1225.9,601.8 1228.6,602.9 1231.4,604.1 1234.2,605.1 1237.0,606.0 1239.8,606.7 1242.7,607.4 1245.6,607.9 1248.5,608.2 1251.4,608.4 1254.2,608.4 1257.1,608.3 1259.9,608.1 1262.8,607.7 1265.6,607.1 1268.3,606.5 1271.0,605.6 1273.7,604.7 1276.3,603.6 1278.8,602.4 1281.3,601.1 1283.8,599.6 1286.1,598.0 1288.4,596.3 1290.6,594.5 1292.7,592.5 1294.7,590.4 1296.6,588.3 1298.4,586.0 1300.1,583.6 1301.7,581.1 1303.1,578.6 1304.5,575.9 1305.8,573.2 1306.9,570.5 1308.0,567.8 1309.1,565.1 1310.2,562.5 1311.4,560.1 1312.8,557.9 1314.4,555.9 1316.4,554.3 1318.6,552.9 1321.0,551.7 1323.6,550.6 1326.3,549.5 1329.0,548.4 1331.7,547.3 1334.4,546.0 1337.1,544.6 1339.6,543.2 1342.1,541.6 1344.5,539.9 1346.8,538.1 1348.9,536.2 1351.0,534.2 1353.0,532.1 1354.8,529.9 1356.5,527.6 1358.1,525.3 1359.6,522.8 1360.9,520.3 1362.1,517.8 1363.2,515.2 1364.1,512.5 1365.0,509.8 1365.6,507.1 1366.2,504.3 1366.6,501.4 1366.8,498.6 1366.9,495.7 1366.9,492.9 1366.7,490.0 1366.4,487.1 1365.9,484.2 1365.2,481.3 1364.5,478.5 1363.6,475.7 1362.6,472.9 1361.4,470.1 1360.3,467.4 1359.2,464.7 1358.1,462.1 1357.2,459.5 1356.7,457.0Z" fill="#fff"/>
<g fill="#179ce3">
<rect x="1187.6" y="410.8" width="11.6" height="23.1" rx="5.8"/>
<rect x="1226.7" y="410.8" width="11.6" height="23.1" rx="5.8"/>
</g>
<path d="M1204.2 443L1212.65 447.3L1221.1 443" stroke="#179ce3" stroke-width="10.5" stroke-linecap="round" stroke-linejoin="round" fill="none"/>
</svg>
<div class="a" id="pill">제품 크기 비교</div>
<svg class="a" style="left:2003px;top:107.8px" width="19" height="28" viewBox="0 0 19 28">
<circle cx="14" cy="14" r="14" fill="#30333c"/>
<text x="14.4" y="20.2" text-anchor="middle" font-family="Liberation Serif" font-size="18" font-weight="bold" fill="#fff">i</text>
</svg>

<!-- filmstrip -->
<div class="a" id="film"></div>
<div class="a" style="left:1934px;top:846px;width:88px;height:30px;background:#ebebe9;border-top-left-radius:11px;border-bottom:1px solid #d6d6d2"></div>
<svg class="a" style="left:1866px;top:813px" width="156" height="43" viewBox="0 0 156 43">
<path d="M21 0H134.7A21 21 0 0 1 151.9 33H78A12 12 0 0 0 68 42.3H21A21 21 0 0 1 21 0Z" fill="#333"/>
<rect x="11" y="7.2" width="39.6" height="28.7" rx="9" fill="#222"/>
<path d="M18.5 16V12.5H22M40 12.5H43.5V16M43.5 27V30.5H40M22 30.5H18.5V27" fill="none" stroke="#ddd" stroke-width="1.4"/>
<rect x="22.5" y="15.6" width="17.5" height="11.8" rx="2.2" fill="none" stroke="#ddd" stroke-width="1.4"/>
<path d="M61 21.5H70.7" stroke="#fff" stroke-width="1.5"/>
<text x="99.3" y="26.3" text-anchor="middle" font-size="12.6" font-weight="bold" fill="#f4f4f4" font-family="Liberation Sans">317%</text>
<path d="M130 21.7H140.2M135.1 16.6V26.8" stroke="#fff" stroke-width="1.5"/>
</svg>

<svg class="a" style="left:420px;top:900px" width="200" height="120" viewBox="420 900 200 120">
<defs>
<pattern id="chk2" x="429.3" y="908.3" width="21.56" height="21.56" patternUnits="userSpaceOnUse">
<rect width="21.56" height="21.56" fill="#fff"/>
<rect x="10.78" y="0" width="10.78" height="10.78" fill="#dedede"/>
<rect x="0" y="10.78" width="10.78" height="10.78" fill="#dedede"/>
</pattern>
<pattern id="chk3" x="528.3" y="914" width="21.5" height="21.5" patternUnits="userSpaceOnUse">
<rect width="21.5" height="21.5" fill="#fff"/>
<rect x="10.75" y="0" width="10.75" height="10.75" fill="#dedede"/>
<rect x="0" y="10.75" width="10.75" height="10.75" fill="#dedede"/>
</pattern>
<filter id="bl"><feGaussianBlur stdDeviation="0.4"/></filter>
</defs>
<rect x="425" y="904" width="86" height="86.6" fill="#fff"/>
<rect x="428.5" y="907.5" width="79" height="79" fill="url(#chk2)" stroke="#c8c8c8" stroke-width="1"/>
<path d="M430.5 982V912M432 910H505.5" fill="none" stroke="#f49cc4" stroke-width="0.8"/>
<path d="M482.8,946.9 483.2,945.5 483.8,944.0 483.9,942.4 483.7,940.9 483.1,939.5 482.2,938.2 481.0,937.3 479.5,936.6 478.2,935.9 477.5,934.6 476.8,933.1 475.9,931.9 474.6,931.0 473.2,930.4 471.7,930.2 470.1,930.3 468.6,930.9 467.2,931.3 465.8,930.9 464.3,930.3 462.7,930.2 461.2,930.4 459.8,931.0 458.5,931.9 457.6,933.1 456.9,934.6 456.2,935.9 454.9,936.6 453.4,937.3 452.2,938.2 451.3,939.5 450.7,940.9 450.5,942.4 450.6,944.0 451.2,945.5 451.6,946.9 451.2,948.3 450.6,949.8 450.5,951.4 450.7,952.9 451.3,954.3 452.2,955.6 453.4,956.5 454.9,957.2 456.2,957.9 456.9,959.2 457.6,960.7 458.5,961.9 459.8,962.8 461.2,963.4 462.7,963.6 464.3,963.5 465.8,962.9 467.2,962.5 468.6,962.9 470.1,963.5 471.7,963.6 473.2,963.4 474.6,962.8 475.9,961.9 476.8,960.7 477.5,959.2 478.2,957.9 479.5,957.2 481.0,956.5 482.2,955.6 483.1,954.3 483.7,952.9 483.9,951.4 483.8,949.8 483.2,948.3Z" fill="#fff" filter="url(#bl)"/>
<path d="M466 945L467.7 946L469.4 945" stroke="#3aa6e6" stroke-width="1.3" fill="none" stroke-linecap="round"/>
<path d="M465.2 942.5V944M470.2 942.5V944" stroke="#3aa6e6" stroke-width="1.3" stroke-linecap="round"/>
<rect x="528" y="913.7" width="78.5" height="78.6" fill="url(#chk3)" stroke="#c8c8c8" stroke-width="1"/>
<path d="M530 987V918M533 915.6H604" fill="none" stroke="#f49cc4" stroke-width="0.8"/>
<path d="M582.6,952.2 583.0,950.8 583.6,949.3 583.7,947.7 583.5,946.2 582.9,944.8 582.0,943.5 580.8,942.6 579.3,941.9 578.0,941.2 577.3,939.9 576.6,938.4 575.7,937.2 574.4,936.3 573.0,935.7 571.5,935.5 569.9,935.6 568.4,936.2 567.0,936.6 565.6,936.2 564.1,935.6 562.5,935.5 561.0,935.7 559.6,936.3 558.3,937.2 557.4,938.4 556.7,939.9 556.0,941.2 554.7,941.9 553.2,942.6 552.0,943.5 551.1,944.8 550.5,946.2 550.3,947.7 550.4,949.3 551.0,950.8 551.4,952.2 551.0,953.6 550.4,955.1 550.3,956.7 550.5,958.2 551.1,959.6 552.0,960.9 553.2,961.8 554.7,962.5 556.0,963.2 556.7,964.5 557.4,966.0 558.3,967.2 559.6,968.1 561.0,968.7 562.5,968.9 564.1,968.8 565.6,968.2 567.0,967.8 568.4,968.2 569.9,968.8 571.5,968.9 573.0,968.7 574.4,968.1 575.7,967.2 576.6,966.0 577.3,964.5 578.0,963.2 579.3,962.5 580.8,961.8 582.0,960.9 582.9,959.6 583.5,958.2 583.7,956.7 583.6,955.1 583.0,953.6Z" fill="#fff" filter="url(#bl)"/>
<path d="M565.6 951L567.3 952L569 951" stroke="#3aa6e6" stroke-width="1.3" fill="none" stroke-linecap="round"/>
<path d="M564.2 949.3L565.6 948.2M570.4 949.3L569 948.2" stroke="#3aa6e6" stroke-width="1.3" stroke-linecap="round"/>
<text x="468" y="1010" text-anchor="middle" font-family="Liberation Serif" font-size="15" fill="#777">1</text>
<text x="567.3" y="1010" text-anchor="middle" font-family="Liberation Serif" font-size="15" fill="#777">2</text>
</svg>
<svg class="a" style="left:386px;top:41px" width="23" height="23" viewBox="0 0 23 23">
<path d="M8 1V20M1 7.5H20" stroke="#d0d0d0" stroke-width="1" stroke-dasharray="1.5 1.5"/>
<path d="M22 0V22" stroke="#111" stroke-width="1.8" stroke-dasharray="1.4 0.8"/>
<path d="M0 22H22" stroke="#111" stroke-width="1.8" stroke-dasharray="1.4 0.8"/>
</svg>
</body></html>
